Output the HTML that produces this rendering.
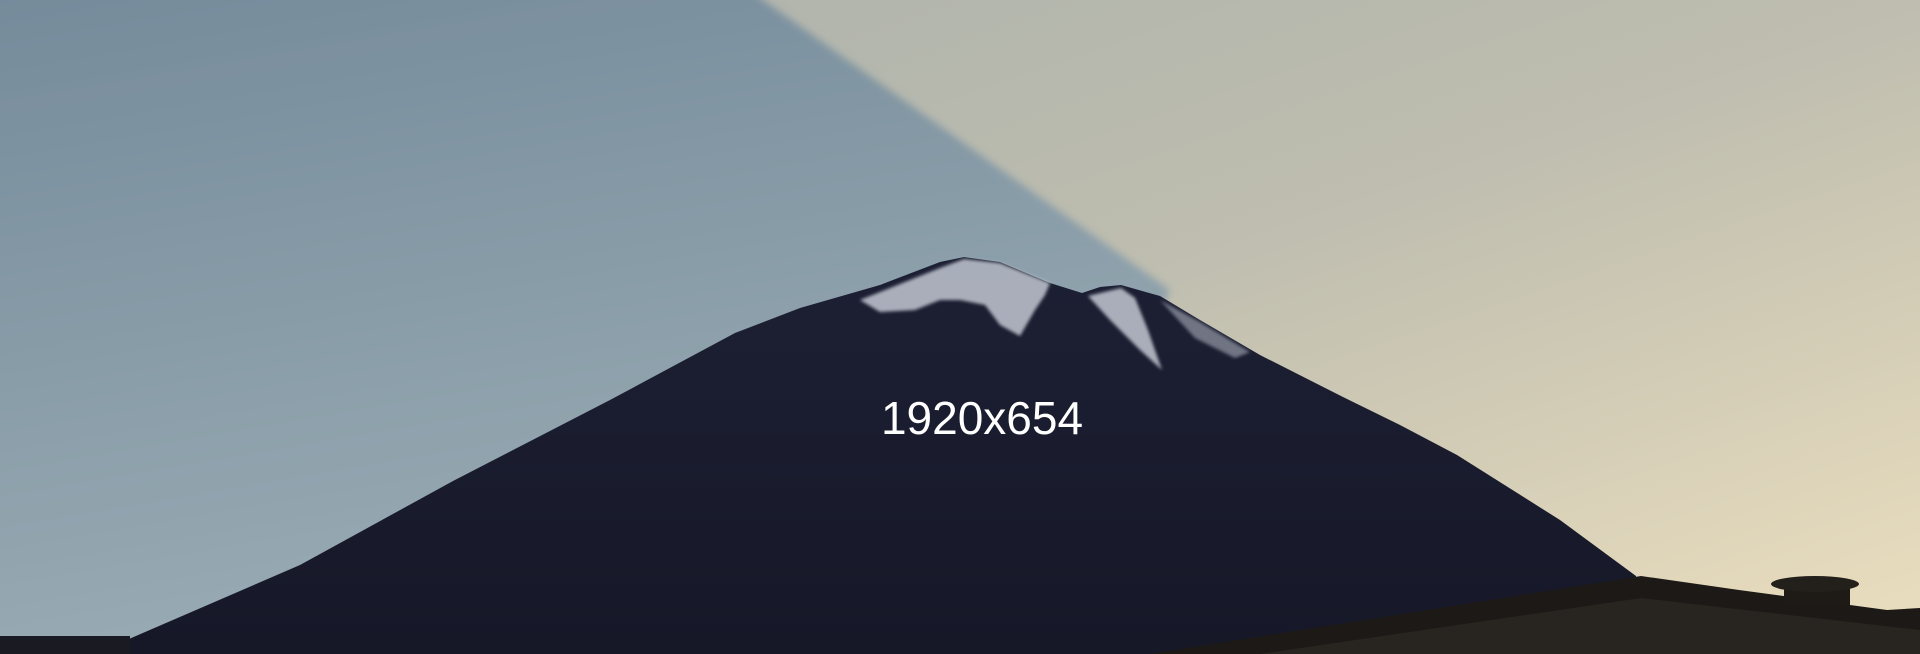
<!DOCTYPE html>
<html><head><meta charset="utf-8"><style>
html,body{margin:0;padding:0;width:1920px;height:654px;overflow:hidden;background:#8a9aa3}
svg{display:block}
</style></head><body>
<svg width="1920" height="654" viewBox="0 0 1920 654" xmlns="http://www.w3.org/2000/svg">
<defs>
<linearGradient id="lit" x1="0" y1="0" x2="1" y2="1">
<stop offset="0" stop-color="#a9b0ab"/>
<stop offset="0.5" stop-color="#bebdaf"/>
<stop offset="1" stop-color="#ecdfbf"/>
</linearGradient>
<linearGradient id="shade" x1="0" y1="0" x2="0.3" y2="1">
<stop offset="0" stop-color="#748a9a"/>
<stop offset="1" stop-color="#9aacb4"/>
</linearGradient>
<linearGradient id="mtn" x1="0" y1="0" x2="0" y2="1">
<stop offset="0" stop-color="#1d2034"/>
<stop offset="1" stop-color="#161828"/>
</linearGradient>
<filter id="b"><feGaussianBlur stdDeviation="4"/></filter>
<filter id="s"><feGaussianBlur stdDeviation="1.5"/></filter>
</defs>
<rect width="1920" height="654" fill="url(#lit)"/>
<polygon points="-20,-20 735,-20 1170,290 1000,660 -20,660" fill="url(#shade)" filter="url(#b)"/>
<polygon fill="url(#mtn)" points="122,642 300,565 453,481 610,400 735,333 800,308 880,285 940,262 964,257 1000,262 1050,283 1082,293 1100,287 1121,285 1160,296 1200,320 1260,355 1343,397 1400,425 1457,455 1560,520 1636,576 1640,654 110,654"/>
<g filter="url(#s)" fill="#c2c8d2" opacity="0.85">
<polygon points="860,300 900,284 940,268 964,259 1000,263 1050,283 1045,295 1035,310 1020,336 1000,325 985,305 960,300 940,300 915,310 880,312"/>
<polygon points="1088,296 1121,288 1135,298 1148,330 1162,370 1140,350 1110,320"/>
<polygon points="1160,300 1200,322 1250,352 1235,358 1195,338" opacity="0.6"/>
</g>
<rect x="0" y="636" width="130" height="18" fill="#1a1a22"/>
<polygon fill="#1c1916" points="1150,654 1641,576 1739,590 1887,610 1920,608 1920,654"/>
<polygon fill="#28241f" points="1260,654 1641,598 1920,630 1920,654"/>
<rect x="1784" y="586" width="66" height="20" fill="#1e1b17"/>
<ellipse cx="1815" cy="584" rx="44" ry="8" fill="#231f1a"/>
<text x="982" y="434" font-family="Liberation Sans, sans-serif" font-size="46" fill="#ffffff" text-anchor="middle">1920x654</text>
</svg>
</body></html>
